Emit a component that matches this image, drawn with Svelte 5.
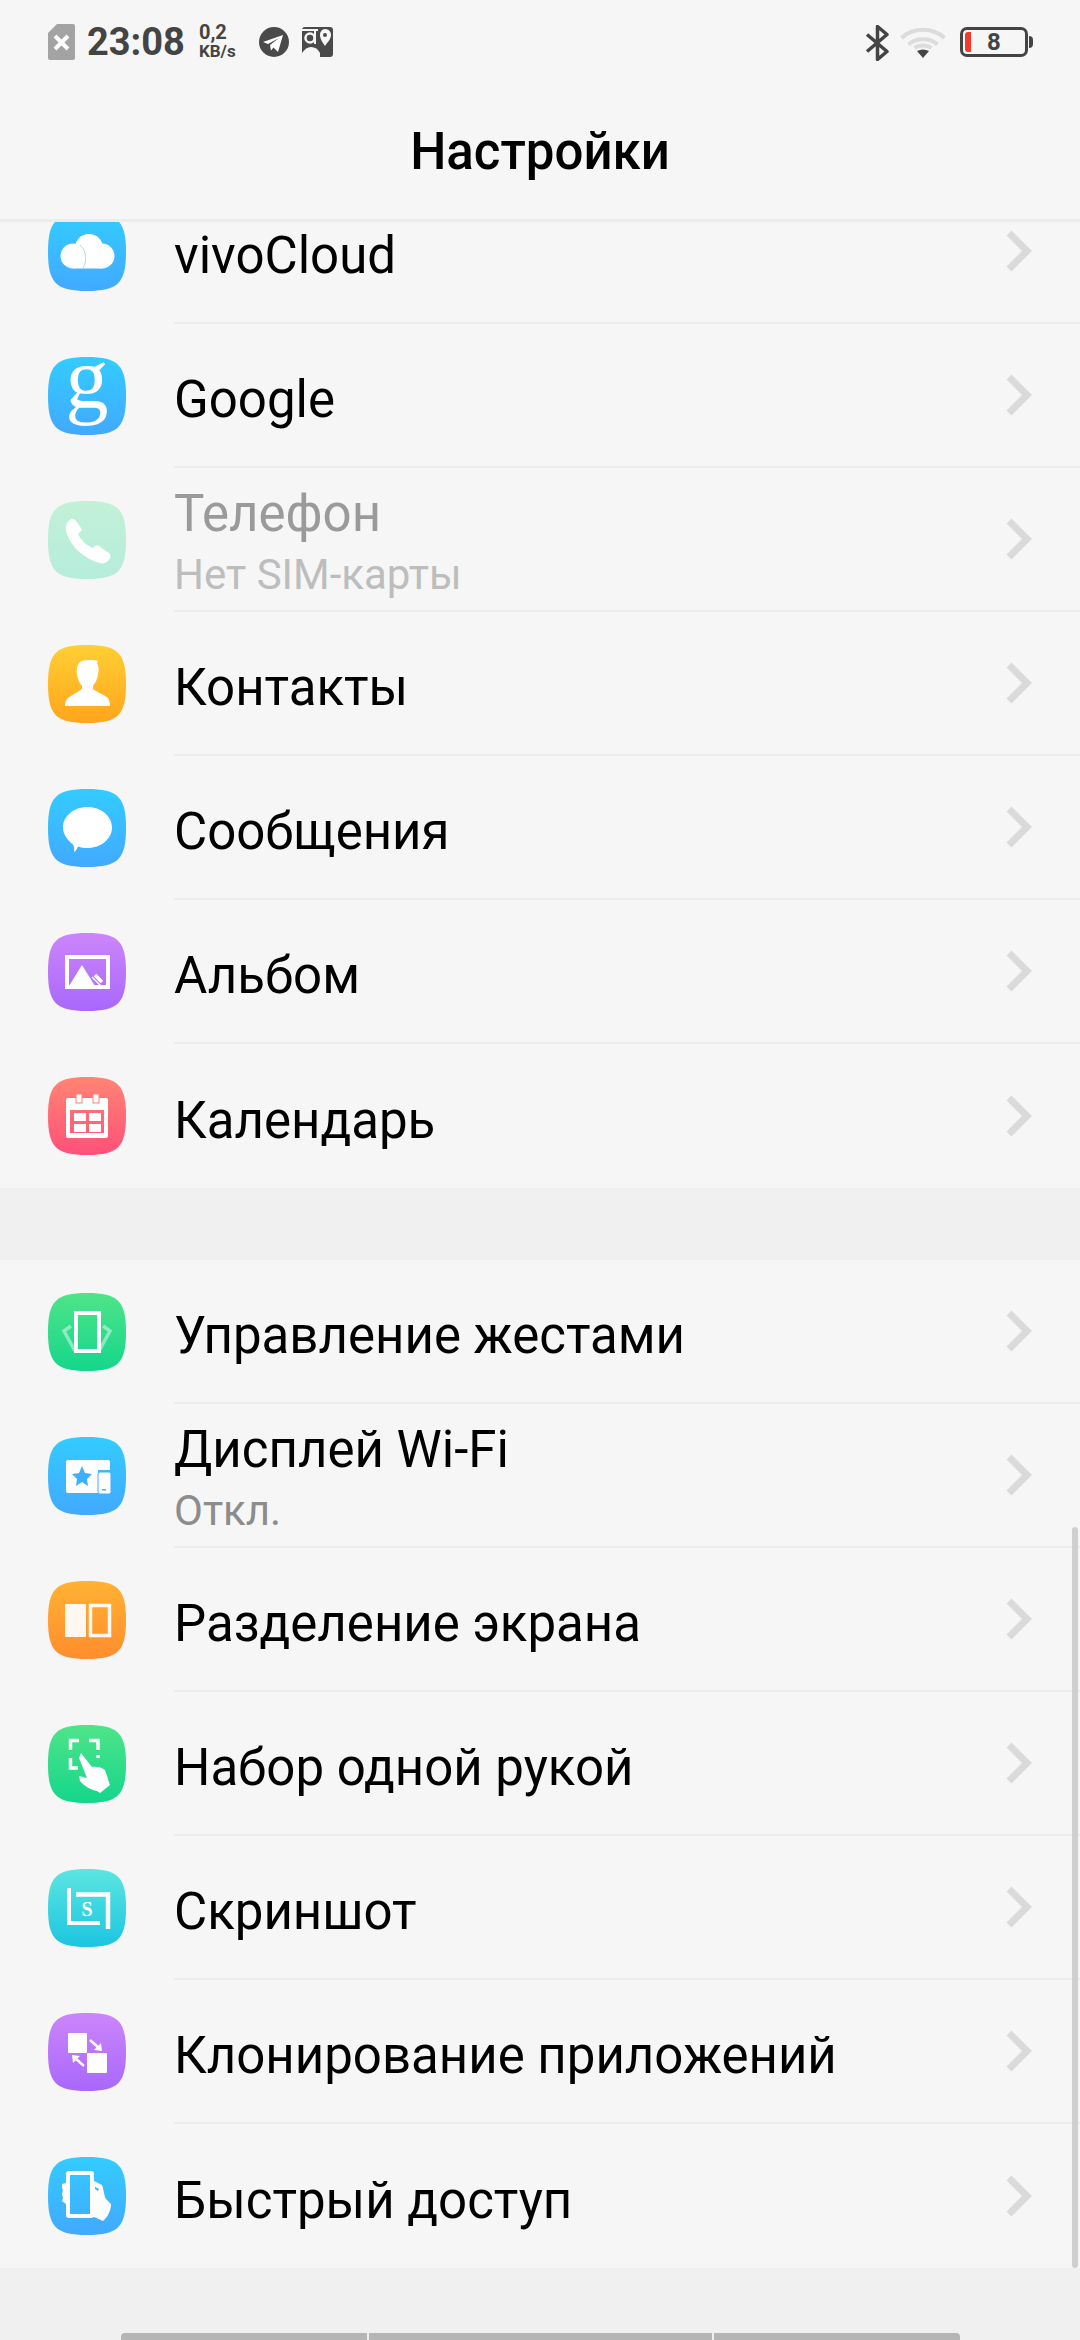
<script>
  const icons = {
    cloud: `<circle cx="25" cy="43" r="12.500" fill="#fff"/><circle cx="41" cy="35" r="14" fill="#fff"/><circle cx="54" cy="43" r="12.500" fill="#fff"/><rect x="25" y="38" width="29" height="17.500" fill="#fff"/><path fill="none" stroke="#9fdcff" stroke-width="1" d="M32 32C39 38 39 49 35 55"/>`,
    google: `<text x="39" y="50" text-anchor="middle" font-family="Liberation Serif" font-size="86" fill="#fff">g</text>`,
    phone: `<path fill="#fff" d="M23 18C25 17 27 19 28 20L33 27C34 29 33 30 32 31L30 33C33 39 39 45 45 47L47 45C48 44 50 44 51 45L61 52C63 54 63 57 61 59C58 62 55 63 52 62C36 58 22 45 18 30C17 25 19 20 23 18Z"/>`,
    contact: `<path fill="#fff" d="M31 18C35 14 44 15 50 16L49 18C51 22 51 26 50 29C50 34 47 38 45 41V44C49 47 57 50 60 53C61 55 62 57 62 61H17C17 57 18 55 20 53C24 50 30 47 34 44V41C31 38 30 34 29 30C28 26 29 21 31 18Z"/>`,
    message: `<path fill="#fff" d="M39.500 18C53 18 64 27 64 38.500C64 50 53 59 39.500 59C36 59 33 58.500 30 57.500C29 60 28 62 26 63C26.500 60 26 57 25 55.500C19 51 15 45 15 38.500C15 27 26 18 39.500 18Z"/>`,
    album: `<path fill="#fff" fill-rule="evenodd" d="M17 22H62V56H17ZM21 26V52H58V26Z"/><path fill="#fff" d="M21 53L34 32L47 53Z"/><path fill="none" stroke="#fff" stroke-width="3.500" d="M47 42L54 49"/><path fill="none" stroke="#fff" stroke-width="1.500" d="M44 44L54 54"/>`,
    calendar: `<path fill="#fff" fill-rule="evenodd" d="M20 21H58Q60 21 60 23V59Q60 61 58 61H20Q18 61 18 59V23Q18 21 20 21ZM22 33V56H56V33Z"/><rect x="26" y="36" width="12" height="8" fill="#fff"/><rect x="41" y="36" width="12" height="8" fill="#fff"/><rect x="26" y="47" width="12" height="8" fill="#fff"/><rect x="41" y="47" width="12" height="8" fill="#fff"/><rect x="28" y="17" width="6" height="9" fill="#fff" stroke="#ff7f74" stroke-width="1"/><rect x="45" y="17" width="6" height="9" fill="#fff" stroke="#ff7f74" stroke-width="1"/>`,
    gesture: `<rect x="28" y="20" width="23" height="38" fill="none" stroke="#fff" stroke-width="4"/><path fill="none" stroke="#fff" stroke-opacity=".45" stroke-width="3.500" d="M23 33L16 38L27 58M55 33L62 38L51 58"/>`,
    wifi: `<path fill="#fff" d="M20 23H60Q62 23 62 25V33H50V56H20Q18 56 18 54V25Q18 23 20 23Z"/><path fill="#3fb0ff" d="M34 29L37 36L44 37L39 42L40 49L34 45L28 49L29 42L24 37L31 36Z"/><rect x="50" y="35" width="13" height="22" rx="2" fill="#fff" stroke="#3fb0ff" stroke-width="1"/><rect x="54" y="52" width="4" height="1.500" fill="#3fb0ff"/>`,
    split: `<rect x="17" y="23" width="21" height="33" rx="1" fill="#fff8f0"/><rect x="42.500" y="24.500" width="19" height="30" fill="none" stroke="#fff8f0" stroke-width="3.500"/>`,
    hand: `<path fill="none" stroke="#fff" stroke-width="3.500" d="M22.500 25V15.500H31M41 15.500H50V25M22.500 33V43H30M50 30V33"/><path fill="#fff" d="M33 28L44 42C47 41 54 42 57 45C59 50 60 55 62 60L52 68L49 66C43 65 36 61 32 56L31 51L39 53L31 33Z"/>`,
    shot: `<path fill="none" stroke="#fff" stroke-width="4" d="M21 19V54H52"/><path fill="none" stroke="#fff" stroke-width="4.500" d="M28 25.500H60V60"/><text x="39" y="47" text-anchor="middle" font-family="Liberation Serif" font-weight="700" font-size="20" fill="#fff">S</text>`,
    clone: `<rect x="20" y="20" width="19" height="20" rx="1" fill="#fff"/><rect x="39" y="40" width="20" height="20" rx="1" fill="#fff"/><path fill="none" stroke="#fff" stroke-width="2.500" d="M42 27L51 35"/><path fill="#fff" d="M54 38L53 30L46 37Z"/><path fill="none" stroke="#fff" stroke-width="2.500" d="M36 53L27 45"/><path fill="#fff" d="M24 42L25 50L32 43Z"/>`,
    quick: `<rect x="20" y="16" width="24" height="43" rx="1" fill="none" stroke="#fff" stroke-width="4"/><path fill="#fff" d="M46 24L54 28C56 33 56 39 58 42L63 47C63 53 60 60 55 64L46 60H44V24ZM18 26L14 27V31L15 33L14 37L15 41L14 44L18 47Z"/><path fill="#3fb0ff" d="M47 30L51 32L50 34L47 32Z"/>`
  };

  const firstGroup = [
    { key: 'cloud', tone: 'blue', title: 'vivoCloud' },
    { key: 'google', tone: 'blue', title: 'Google' },
    { key: 'phone', tone: 'mint', title: 'Телефон', sub: 'Нет SIM-карты', off: true },
    { key: 'contact', tone: 'yellow', title: 'Контакты' },
    { key: 'message', tone: 'blue', title: 'Сообщения' },
    { key: 'album', tone: 'purple', title: 'Альбом' },
    { key: 'calendar', tone: 'red', title: 'Календарь' }
  ];
  const secondGroup = [
    { key: 'gesture', tone: 'green', title: 'Управление жестами' },
    { key: 'wifi', tone: 'blue', title: 'Дисплей Wi-Fi', sub: 'Откл.' },
    { key: 'split', tone: 'orange', title: 'Разделение экрана' },
    { key: 'hand', tone: 'green', title: 'Набор одной рукой' },
    { key: 'shot', tone: 'teal', title: 'Скриншот' },
    { key: 'clone', tone: 'purple', title: 'Клонирование приложений' },
    { key: 'quick', tone: 'blue', title: 'Быстрый доступ' }
  ];
</script>

{#snippet row(item)}
  <div class="row" class:off={item.off}>
    <div class="icon {item.tone}">
      <svg viewBox="0 0 78 78" width="78" height="78">{@html icons[item.key]}</svg>
    </div>
    <div class="body">
      <div class="labels" class:two={item.sub}>
        <div class="title">{item.title}</div>
        {#if item.sub}<div class="sub">{item.sub}</div>{/if}
      </div>
      <svg class="chev" viewBox="0 0 26 42" width="26" height="42"><path d="M3 3L21 21L3 39" /></svg>
    </div>
  </div>
{/snippet}

<div class="app">
  <header>
    <div class="status">
      <svg class="sim" viewBox="0 0 27 36" width="27" height="36">
        <path fill="#a3a3a3" d="M9 0H25Q27 0 27 2V34Q27 36 25 36H2Q0 36 0 34V9Z"/>
        <path stroke="#fff" stroke-width="4" d="M7 12L20 25M20 12L7 25"/>
      </svg>
      <span class="time">23:08</span>
      <span class="speed"><span>0,2</span><span class="unit">KB/s</span></span>
      <svg class="tg" viewBox="0 0 30 30" width="30" height="30">
        <circle cx="15" cy="15" r="15" fill="#4a4a4a"/>
        <path fill="#fff" d="M4 15L24 8L19 25L14.500 20.500L12 23.500L11 18L20 11L9 17Z"/>
      </svg>
      <svg class="maps" viewBox="0 0 31 30" width="31" height="30">
        <rect width="31" height="30" rx="3" fill="#4a4a4a"/>
        <circle cx="8" cy="11" r="4.500" fill="none" stroke="#f6f6f6" stroke-width="2.500"/>
        <path fill="none" stroke="#f6f6f6" stroke-width="2" d="M0 3H16M13 4V17"/>
        <path fill="#f6f6f6" d="M0 26Q4 20 9 20Q15 20 18 26V30H0Z"/>
        <path fill="#f6f6f6" d="M23 2C27 2 29 5 29 8C29 12 25 16 23 19C21 16 18 12 18 8C18 5 20 2 23 2Z"/>
        <circle cx="23" cy="8" r="2" fill="#4a4a4a"/>
      </svg>
      <span class="spacer"></span>
      <svg class="bt" viewBox="0 0 24 36" width="24" height="36">
        <path fill="none" stroke="#444" stroke-width="3.500" stroke-linejoin="round" d="M2 9.500L22 26.500L12.500 34.500V1.500L22 9.500L2 26.500"/>
      </svg>
      <svg class="wifi" viewBox="0 0 46 32" width="46" height="32">
        <path fill="none" stroke="#dcdcdc" stroke-width="4" d="M1.500 12C13 1 33 1 44.500 12M8.500 18.500C16 11.500 30 11.500 37.500 18.500"/>
        <path fill="none" stroke="#dcdcdc" stroke-width="4" d="M14.500 22C19 18.500 27 18.500 31.500 22"/>
        <path fill="#444" d="M17 25Q23 22 29 25L23 32Z"/>
      </svg>
      <div class="battery">
        <span class="level"></span>
        <span class="pct">8</span>
        <span class="nub"></span>
      </div>
    </div>
    <h1>Настройки</h1>
  </header>

  <main>
    <div class="scroller">
      <section class="scrolled">
        {#each firstGroup as item}{@render row(item)}{/each}
      </section>
      <section class="second">
        {#each secondGroup as item}{@render row(item)}{/each}
      </section>
    </div>
    <div class="scrollbar"></div>
  </main>

  <nav>
    <span class="seg a"></span><span class="seg b"></span><span class="seg c"></span>
  </nav>
</div>

<style>
  :global(body) { margin: 0; background: #f0f0f0; }
  .app {
    width: 1080px; height: 2340px; display: flex; flex-direction: column;
    font-family: Roboto, sans-serif; color: #000; background: #f0f0f0; overflow: hidden;
  }
  header { height: 222px; box-sizing: border-box; background: #f6f6f6; border-bottom: 3px solid #ececec; flex: none; }
  .status { height: 84px; display: flex; align-items: flex-start; padding: 0 48px; box-sizing: border-box; color: #444; }
  .sim { margin-top: 24px; flex: none; }
  .time { margin-left: 12px; margin-top: 20px; font-size: 38px; line-height: 44px; font-weight: 700; }
  .speed { display: flex; flex-direction: column; margin-left: 14px; margin-top: 22px; font-weight: 700; font-size: 20px; line-height: 20px; }
  .speed .unit { font-size: 17px; line-height: 19px; }
  .tg { margin-left: 23px; margin-top: 27px; flex: none; }
  .maps { margin-left: 13px; margin-top: 27px; flex: none; }
  .spacer { flex: 1; }
  .bt { margin-top: 25px; flex: none; }
  .wifi { margin-left: 11px; margin-top: 26px; flex: none; }
  .battery {
    position: relative; margin-left: 14px; margin-top: 27px; width: 68px; height: 30px; box-sizing: border-box;
    border: 3px solid #444; border-radius: 7px; margin-right: 4px; flex: none;
  }
  .level { position: absolute; left: 2px; top: 2px; width: 6px; height: 20px; background: #f5392b; border-radius: 3px 0 0 3px; }
  .pct { position: absolute; left: 24px; top: 0; font-size: 24px; line-height: 24px; font-weight: 700; color: #444; }
  .nub { position: absolute; right: -8px; top: 6px; width: 4px; height: 12px; background: #444; border-radius: 0 4px 4px 0; }
  h1 { margin: 0; height: 135px; display: flex; align-items: center; justify-content: center; font-size: 51px; font-weight: 500; line-height: 1; }

  main { position: relative; height: 2046px; flex: none; overflow: hidden; }
  .scroller { display: flex; flex-direction: column; gap: 72px; }
  section { background: #f6f6f6; }
  .scrolled { margin-top: -42px; }
  .row { height: 144px; display: flex; align-items: center; padding-left: 48px; }
  .icon {
    width: 78px; height: 78px; flex: none;
    clip-path: path('M39 0C70 0 78 8 78 39S70 78 39 78S0 70 0 39S8 0 39 0Z');
  }
  .icon svg { display: block; }
  .blue { background: linear-gradient(#33ccff, #42a9ff); }
  .mint { background: linear-gradient(#c3f0d8, #b5eddb); }
  .yellow { background: linear-gradient(#ffcf33, #ffa51c); }
  .purple { background: linear-gradient(#cc85fa, #a868fc); }
  .red { background: linear-gradient(#ff8573, #ff5079); }
  .green { background: linear-gradient(#4fe488, #14d68c); }
  .orange { background: linear-gradient(#ffb233, #ff8d2e); }
  .teal { background: linear-gradient(#5ce6e0, #1cc5e0); }
  .body {
    flex: 1; height: 100%; margin-left: 48px; display: flex; align-items: center; justify-content: space-between;
    padding-right: 48px; box-sizing: border-box; border-bottom: 2px solid #ececec;
  }
  .row:last-child .body { border-bottom: none; }
  .labels { padding-top: 10px; }
  .labels.two { padding-top: 6px; }
  .title { font-size: 51px; line-height: 58px; }
  .sub { font-size: 42px; line-height: 50px; color: #8c8c8c; margin-top: 7px; }
  .off .title { color: #9a9a9a; }
  .off .sub { color: #bdbdbd; }
  .chev { flex: none; }
  .chev path { fill: none; stroke: #dadada; stroke-width: 7; }
  .scrollbar { position: absolute; right: 2px; top: 1305px; width: 6px; height: 741px; background: #cfcfcf; border-radius: 3px; }
  nav { flex: 1; display: flex; align-items: flex-end; gap: 2px; padding-left: 121px; }
  .seg { height: 7px; background: #b5b5b5; display: block; }
  .a { width: 246px; border-radius: 4px 0 0 0; }
  .b { width: 343px; }
  .c { width: 246px; border-radius: 0 4px 0 0; }
</style>
